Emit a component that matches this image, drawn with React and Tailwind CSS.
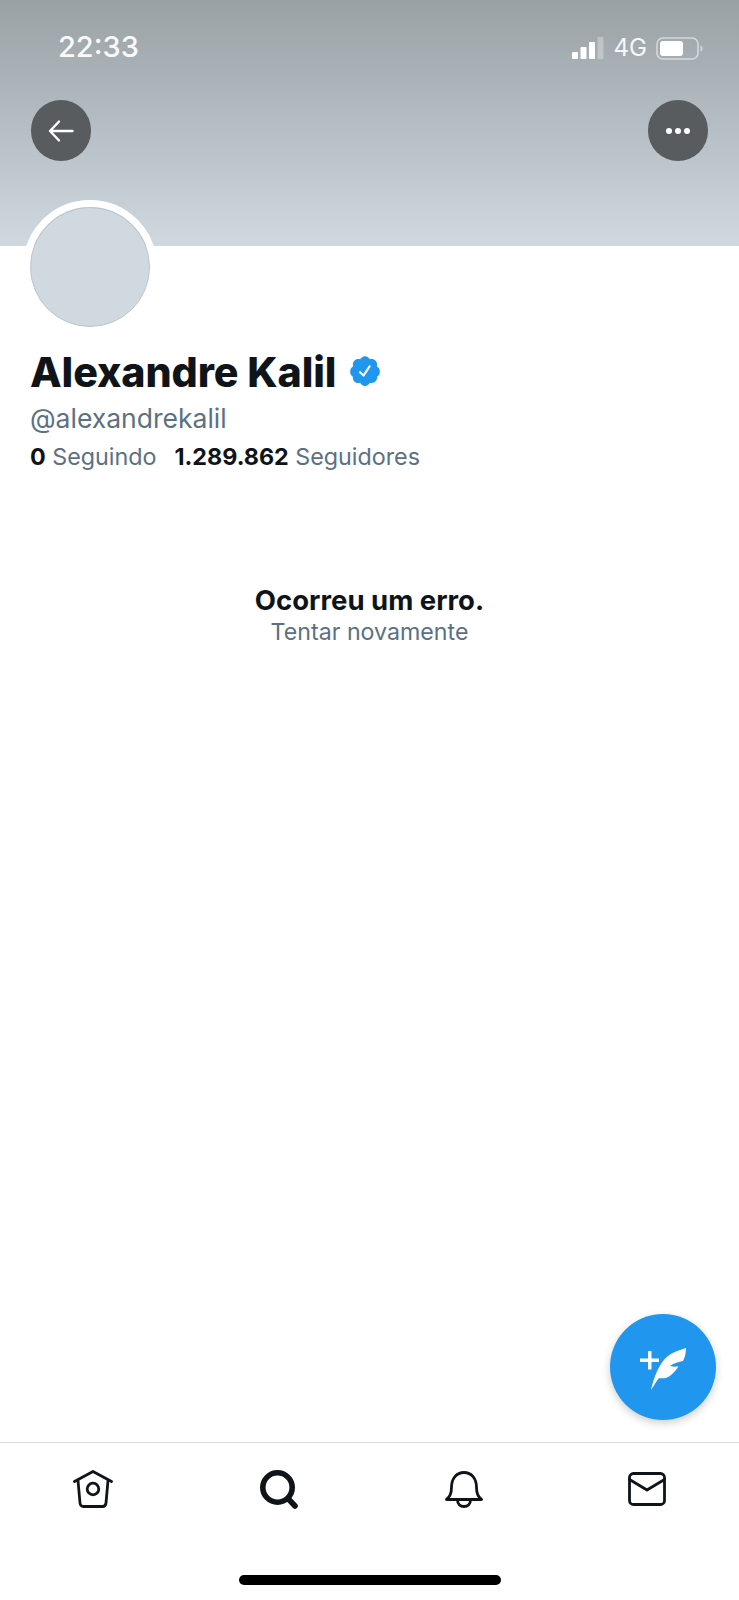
export default function App() {
  const sans = "font-['Inter','Liberation_Sans',sans-serif]";
  return (
    <div className={`relative flex h-[1600px] w-[739px] flex-col overflow-hidden bg-white ${sans}`}>
      <div className="h-[246px] bg-gradient-to-b from-[#99a1a4] via-[#b4bdc3] to-[#d0d9df]">
        <div className="flex h-[100px] items-start justify-between pl-[58px] pr-[36px] pt-[29px]">
          <span className="text-[29px] font-medium leading-[36px] text-white/95">22:33</span>
          <div className="flex items-center pt-[7px]">
            <svg width="32" height="23" viewBox="0 0 32 23">
              <rect x="0" y="15" width="6" height="7" rx="1" fill="#fff" />
              <rect x="8.500" y="10" width="6" height="12" rx="1" fill="#fff" />
              <rect x="17" y="5" width="6" height="17" rx="1" fill="#fff" />
              <rect x="25.500" y="0" width="6" height="22" rx="1" fill="#fff" opacity="0.3" />
            </svg>
            <span className="ml-[10px] text-[24px] font-normal leading-[24px] text-white/90">4G</span>
            <svg className="ml-[9px]" width="47" height="23" viewBox="0 0 47 23">
              <rect x="1" y="1" width="41" height="21" rx="6" fill="none" stroke="#fff" strokeOpacity="0.55" strokeWidth="1.5" />
              <rect x="4" y="4" width="23" height="15" rx="3" fill="#fff" />
              <path d="M44.500 8.500c1.500.6 2 1.700 2 3s-.5 2.400-2 3z" fill="#fff" fillOpacity="0.55" />
            </svg>
          </div>
        </div>
        <div className="flex items-start justify-between px-[31px]">
          <div className="flex h-[61px] w-[60px] items-center justify-center rounded-full bg-[#595c5f]">
            <svg width="26" height="24" viewBox="0 0 26 24" fill="none" stroke="#fff" strokeWidth="2.400" strokeLinecap="round" strokeLinejoin="round">
              <path d="M24.500 12H2M11 2.500 2 12l9 9.500" />
            </svg>
          </div>
          <div className="flex h-[61px] w-[60px] items-center justify-center gap-[3px] rounded-full bg-[#595c5f]">
            <span className="h-[6px] w-[6px] rounded-full bg-white" />
            <span className="h-[6px] w-[6px] rounded-full bg-white" />
            <span className="h-[6px] w-[6px] rounded-full bg-white" />
          </div>
        </div>
      </div>

      <div className="z-10 ml-[23px] mt-[-46px] h-[134px] w-[134px] rounded-full border-[7px] border-white">
        <div className="h-full w-full rounded-full border border-[#bcc7ce] bg-[#cfd9df]" />
      </div>

      <div className="mt-[10px] pl-[30px]">
        <div className="flex items-center">
          <h1 className="text-[41.200px] font-extrabold leading-[56px] tracking-[-0.1px] text-[#0f1419]">Alexandre Kalil</h1>
          <svg className="ml-[12px] mt-[-3px]" width="34" height="34" viewBox="0 0 24 24">
            <circle cx="12" cy="12" r="7" fill="#fff" />
            <path fill="#2196ee" d="M22.5 12.5c0-1.58-.875-2.95-2.148-3.6.154-.435.238-.905.238-1.4 0-2.21-1.71-3.998-3.818-3.998-.47 0-.92.084-1.336.25C14.818 2.415 13.51 1.5 12 1.5s-2.816.917-3.437 2.25c-.415-.165-.866-.25-1.336-.25-2.11 0-3.818 1.79-3.818 4 0 .494.083.964.237 1.4-1.272.65-2.147 2.018-2.147 3.6 0 1.495.782 2.798 1.942 3.486-.02.17-.032.34-.032.514 0 2.21 1.708 4 3.818 4 .47 0 .92-.086 1.335-.25.62 1.334 1.926 2.25 3.437 2.25 1.512 0 2.818-.916 3.437-2.25.415.163.865.248 1.336.248 2.11 0 3.818-1.79 3.818-4 0-.174-.012-.344-.033-.513 1.158-.687 1.943-1.99 1.943-3.484zm-6.616-3.334l-4.334 6.5c-.145.217-.382.334-.625.334-.143 0-.288-.04-.416-.126l-.115-.094-2.415-2.415c-.293-.293-.293-.768 0-1.06s.768-.294 1.06 0l1.77 1.767 3.825-5.74c.23-.345.696-.436 1.04-.207.346.23.44.696.21 1.04z" />
          </svg>
        </div>
        <p className="text-[26.500px] leading-[36px] text-[#5b7083]">@alexandrekalil</p>
        <div className="mt-[3px] flex text-[23.300px] leading-[36px] text-[#5b7083]">
          <span><b className="font-bold text-[#0f1419]">0</b> Seguindo</span>
          <span className="ml-[18px]"><b className="font-bold text-[#0f1419]">1.289.862</b> Seguidores</span>
        </div>
      </div>

      <div className="mt-[108px] text-center">
        <p className="text-[27.500px] font-bold leading-[34px] text-[#0f1419]">Ocorreu um erro.</p>
        <p className="mt-[1px] text-[23.200px] leading-[29px] text-[#5b7083]">Tentar novamente</p>
      </div>

      <div className="flex-1" />

      <div className="absolute left-[610px] top-[1314px] flex h-[106px] w-[106px] items-center justify-center rounded-full bg-[#2196ee] pt-[4px] shadow-[0_3px_8px_rgba(0,0,0,0.2)]">
        <svg width="46" height="42" viewBox="0 0 46 42" fill="#fff">
          <path d="M8 3h3.500v7.500H19v3.500h-7.500v7.500H8V14H0v-3.500h8z" />
          <path d="M11 42C14 28 20 14 28 8 33 4 40 2 46 0 46 5 45 9 43 13 39 14 34 15 30 18 33 19 36 18.500 38.500 18.500 35 24 31 28 26 30 23 30.500 20 30 18.500 30.500 16 34 13 39 11 42z" />
        </svg>
      </div>

      <nav className="flex h-[158px] items-start border-t border-[#dcdfe1] pt-[27px]">
        <div className="flex h-[38px] w-[186px] items-center justify-center">
          <svg width="40" height="38" viewBox="0 0 40 38" fill="none" stroke="#0f1419" strokeWidth="2.800" strokeLinecap="round" strokeLinejoin="round">
            <path d="M1.500 11.500 20 1.500l18.500 10" />
            <path d="M5 10.500l2 22.500c.2 2 1.500 3.500 3.500 3.500h19c2 0 3.300-1.500 3.500-3.500l2-22.500" />
            <circle cx="20" cy="19" r="5.800" />
          </svg>
        </div>
        <div className="flex h-[38px] w-[186px] items-center justify-center">
          <svg width="38" height="39" viewBox="0 0 38 39" fill="none" stroke="#0f1419" strokeLinecap="round" strokeWidth="5.600">
            <circle cx="17.500" cy="17.500" r="14.700" />
            <path d="M28 28.500 35 36" />
          </svg>
        </div>
        <div className="flex h-[38px] w-[184px] items-center justify-center">
          <svg width="38" height="37" viewBox="0 0 38 37" fill="none" stroke="#0f1419" strokeWidth="2.800" strokeLinecap="round" strokeLinejoin="round">
            <path d="M1.500 28.500c3.500-2.500 5-5.500 5-12C6.500 7.500 11.500 1.500 19 1.500s12.500 6 12.500 15c0 6.500 1.500 9.500 5 12z" />
            <path d="M12.500 29c0 4.500 3 6.500 6.500 6.500s6.500-2 6.500-6.500" />
          </svg>
        </div>
        <div className="flex h-[38px] w-[182px] items-center justify-center">
          <svg width="38" height="34" viewBox="0 0 38 34" fill="none" stroke="#0f1419" strokeWidth="2.800" strokeLinecap="round" strokeLinejoin="round">
            <rect x="1.500" y="1.500" width="35" height="31" rx="4" />
            <path d="M1.500 7.500 19 18 36.500 7.500" />
          </svg>
        </div>
      </nav>

      <div className="absolute bottom-[15px] left-[239px] h-[10px] w-[262px] rounded-full bg-black" />
    </div>
  );
}
